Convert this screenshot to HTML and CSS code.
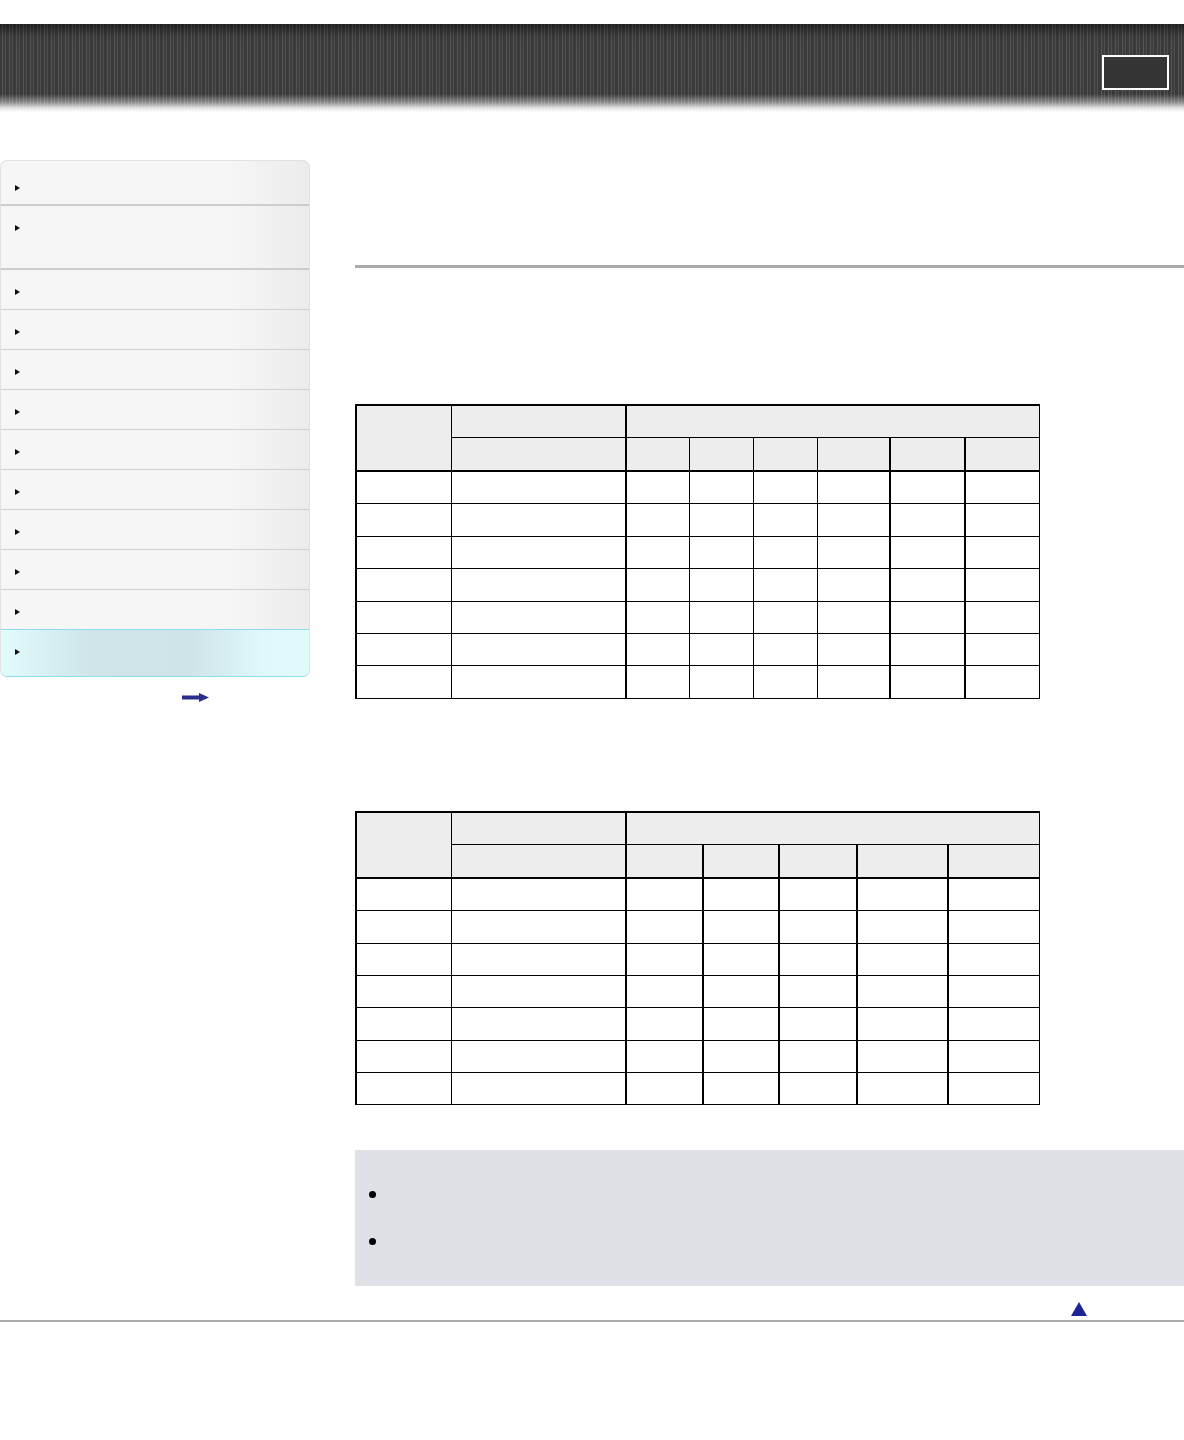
FILE: index.html
```html
<!DOCTYPE html>
<html>
<head>
<meta charset="utf-8">
<title>Help Guide</title>
<link rel="stylesheet" href="styles.css">
</head>
<body>
<header class="topbar">
  <div class="topbar-fade"></div>
  <div class="topbar-box"></div>
</header>
<div class="layout">
  <aside class="side">
    <nav class="menu">
      <div class="menu-item first"><span class="tri"></span></div>
      <div class="menu-item tall"><span class="tri"></span></div>
      <div class="menu-item"><span class="tri"></span></div>
      <div class="menu-item"><span class="tri"></span></div>
      <div class="menu-item"><span class="tri"></span></div>
      <div class="menu-item"><span class="tri"></span></div>
      <div class="menu-item"><span class="tri"></span></div>
      <div class="menu-item"><span class="tri"></span></div>
      <div class="menu-item"><span class="tri"></span></div>
      <div class="menu-item"><span class="tri"></span></div>
      <div class="menu-item"><span class="tri"></span></div>
      <div class="menu-item active"><span class="tri"></span></div>
    </nav>
    <div class="more">
      <svg width="27" height="9" viewBox="0 0 27 9"><rect x="0" y="2.5" width="19" height="4" fill="#2b2e8a"/><polygon points="17,0 27,4.5 17,9" fill="#2b2e8a"/></svg>
    </div>
  </aside>
  <main class="main">
    <div class="title"></div>
    <table class="grid g1">
      <colgroup><col style="width:95px"><col style="width:175px"><col style="width:63px"><col style="width:64px"><col style="width:64px"><col style="width:73px"><col style="width:75px"><col style="width:74px"></colgroup>
      <tr class="h h1"><td rowspan="2" class="c0"></td><td></td><td colspan="6" class="thick"></td></tr>
      <tr class="h hb"><td></td><td class="thick"></td><td></td><td></td><td></td><td class="thick"></td><td class="thick"></td></tr>
      <tr><td></td><td></td><td class="thick"></td><td></td><td></td><td></td><td class="thick"></td><td class="thick"></td></tr>
      <tr><td></td><td></td><td class="thick"></td><td></td><td></td><td></td><td class="thick"></td><td class="thick"></td></tr>
      <tr><td></td><td></td><td class="thick"></td><td></td><td></td><td></td><td class="thick"></td><td class="thick"></td></tr>
      <tr><td></td><td></td><td class="thick"></td><td></td><td></td><td></td><td class="thick"></td><td class="thick"></td></tr>
      <tr><td></td><td></td><td class="thick"></td><td></td><td></td><td></td><td class="thick"></td><td class="thick"></td></tr>
      <tr><td></td><td></td><td class="thick"></td><td></td><td></td><td></td><td class="thick"></td><td class="thick"></td></tr>
      <tr><td></td><td></td><td class="thick"></td><td></td><td></td><td></td><td class="thick"></td><td class="thick"></td></tr>
    </table>
    <table class="grid g2">
      <colgroup><col style="width:95px"><col style="width:175px"><col style="width:77px"><col style="width:76px"><col style="width:78px"><col style="width:91px"><col style="width:91px"></colgroup>
      <tr class="h h1"><td rowspan="2" class="c0"></td><td></td><td colspan="5" class="thick"></td></tr>
      <tr class="h hb"><td></td><td class="thick"></td><td class="thick"></td><td class="thick"></td><td class="thick"></td><td class="thick"></td></tr>
      <tr><td></td><td></td><td class="thick"></td><td class="thick"></td><td class="thick"></td><td class="thick"></td><td class="thick"></td></tr>
      <tr><td></td><td></td><td class="thick"></td><td class="thick"></td><td class="thick"></td><td class="thick"></td><td class="thick"></td></tr>
      <tr><td></td><td></td><td class="thick"></td><td class="thick"></td><td class="thick"></td><td class="thick"></td><td class="thick"></td></tr>
      <tr><td></td><td></td><td class="thick"></td><td class="thick"></td><td class="thick"></td><td class="thick"></td><td class="thick"></td></tr>
      <tr><td></td><td></td><td class="thick"></td><td class="thick"></td><td class="thick"></td><td class="thick"></td><td class="thick"></td></tr>
      <tr><td></td><td></td><td class="thick"></td><td class="thick"></td><td class="thick"></td><td class="thick"></td><td class="thick"></td></tr>
      <tr><td></td><td></td><td class="thick"></td><td class="thick"></td><td class="thick"></td><td class="thick"></td><td class="thick"></td></tr>
    </table>
    <div class="note">
      <ul>
        <li></li>
        <li></li>
      </ul>
    </div>
    <div class="totop">
      <svg width="16" height="14" viewBox="0 0 16 14"><polygon points="8,0 16,14 0,14" fill="#1f2494"/></svg>
    </div>
  </main>
</div>
<footer class="foot"></footer>
</body>
</html>
```
FILE: styles.css
```css
html, body {
  margin: 0;
  padding: 0;
  background: #fff;
  font-family: "Liberation Sans", Arial, sans-serif;
  font-size: 13px;
  color: #000;
}

.topbar {
  position: relative;
  margin-top: 24px;
  height: 88px;
  background:
    repeating-linear-gradient(90deg, #3b3b3b 0 2px, #555 2px 3px, #3d3d3d 3px 5px, #505050 5px 6px, #383838 6px 7px),
    #3b3b3b;
}
.topbar-fade {
  position: absolute;
  left: 0; right: 0; top: 0; bottom: 0;
  background: linear-gradient(180deg,
    rgba(0,0,0,0.45) 0px,
    rgba(0,0,0,0.05) 12px,
    rgba(0,0,0,0) 20px,
    rgba(0,0,0,0) 70px,
    rgba(255,255,255,0.4) 78px,
    rgba(255,255,255,0.85) 84px,
    #fff 88px);
}
.topbar-box {
  position: absolute;
  left: 1102px;
  top: 31px;
  width: 63px;
  height: 31px;
  border: 2px solid #fff;
  background: #353535;
}

.layout {
  display: flex;
  gap: 45px;
}

.side {
  width: 310px;
  flex: none;
  padding-top: 48px;
}
.menu {
  border: 1px solid #e2e2e2;
  border-bottom: none;
  border-radius: 7px;
  overflow: hidden;
  background: linear-gradient(90deg, #f6f6f6 0, #f6f6f6 230px, #ebebec 310px);
}
.menu-item {
  box-sizing: border-box;
  height: 40px;
  border-bottom: 1px solid #d2d2d2;
  padding: 19px 0 0 14px;
}
.menu-item.first {
  height: 45px;
  border-bottom: 2px solid #cdcdcd;
  padding-top: 24px;
}
.menu-item.tall {
  height: 64px;
  border-bottom: 2px solid #cdcdcd;
  padding-top: 19px;
}
.menu-item.active {
  height: 48px;
  border: 1px solid #8edcf3;
  border-radius: 0 0 7px 7px;
  margin: -1px -1px 0 -1px;
  background: linear-gradient(90deg, #e2fbfd 0, #cfe5e7 90px, #cfe4e6 190px, #dff8fa 260px, #e1fbfd 310px);
}
.tri {
  display: block;
  width: 0;
  height: 0;
  border-top: 3.5px solid transparent;
  border-bottom: 3.5px solid transparent;
  border-left: 5px solid #111;
}
.more {
  padding: 16px 0 0 182px;
  line-height: 0;
}

.main {
  flex: 1;
  min-width: 0;
}
.title {
  height: 153px;
  border-bottom: 3px solid #aaa;
  margin-bottom: 136px;
}

.grid {
  border-collapse: collapse;
  table-layout: fixed;
  border-top: 2px solid #000;
  border-left: 2px solid #000;
  border-right: 1px solid #000;
  border-bottom: 1px solid #000;
}
.grid td {
  border: 1px solid #000;
  height: 31.4px;
  padding: 0;
}
.grid tr.h td {
  background: #ededed;
  height: 32px;
}
.grid tr.h1 td {
  height: 31px;
}
.grid tr.hb td,
.grid td.c0 {
  border-bottom: 2px solid #000;
}
.grid td.thick {
  border-left: 2px solid #000;
}
.g1 {
  margin-bottom: 112px;
}
.g2 {
  margin-bottom: 45px;
}

.note {
  background: #dfe1e6;
  height: 136px;
  box-sizing: border-box;
  padding: 40px 0 0 14px;
}
.note ul {
  margin: 0;
  padding: 0;
  list-style: none;
}
.note li {
  position: relative;
  height: 47px;
}
.note li::before {
  content: "";
  position: absolute;
  left: 0;
  top: 1px;
  width: 7px;
  height: 7px;
  border-radius: 50%;
  background: #000;
}

.totop {
  padding: 16px 0 0 716px;
  height: 18px;
  line-height: 0;
}

.foot {
  border-top: 2px solid #aaa;
  height: 118px;
}
```
